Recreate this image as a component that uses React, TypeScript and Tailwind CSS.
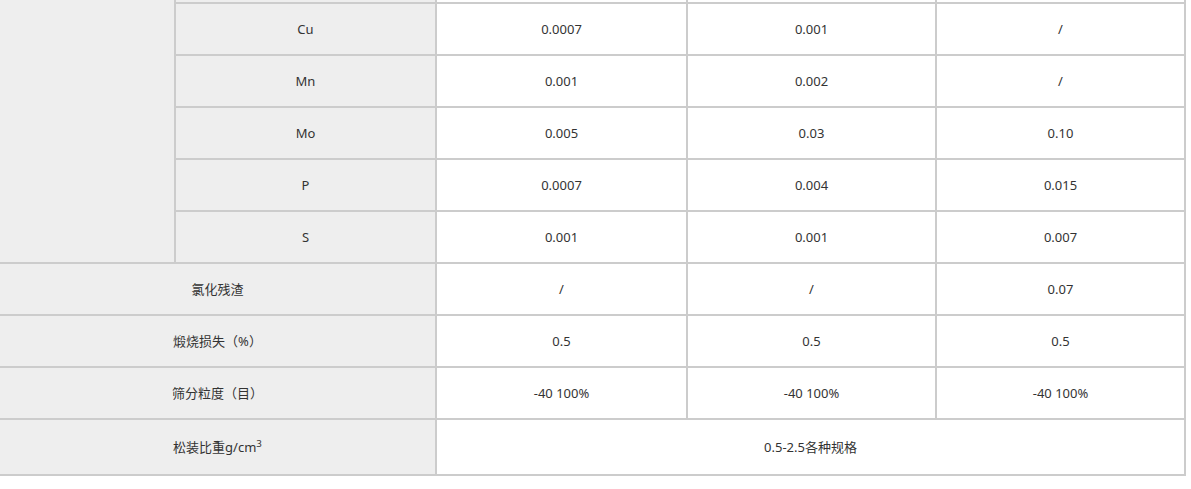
const ROWS: { name: string; values: string[] }[] = [
  { name: 'Cu', values: ['0.0007', '0.001', '/'] },
  { name: 'Mn', values: ['0.001', '0.002', '/'] },
  { name: 'Mo', values: ['0.005', '0.03', '0.10'] },
  { name: 'P', values: ['0.0007', '0.004', '0.015'] },
  { name: 'S', values: ['0.001', '0.001', '0.007'] }
]

const PROPS: { name: string; values: string[] }[] = [
  { name: '氯化残渣', values: ['/', '/', '0.07'] },
  { name: '煅烧损失（%）', values: ['0.5', '0.5', '0.5'] },
  { name: '筛分粒度（目）', values: ['-40 100%', '-40 100%', '-40 100%'] }
]

const cell = 'flex h-[50px] items-center justify-center pt-[2px]'
const head = `${cell} bg-[#eeeeee]`
const body = `${cell} bg-white`

export default function App() {
  return (
    <div
      className="h-[489px] w-[1191px] overflow-hidden bg-white text-[13px] text-[#333333]"
      style={{ fontFamily: '"Noto Sans", "Noto Sans CJK SC", sans-serif' }}
    >
      <div className="-mt-[48px] w-[1186px] bg-[#cccccc] pb-[2px] pr-[2px]">
        <div className="grid grid-cols-[174px_259px_249px_247px_247px] gap-[2px]">
          {/* merged impurity column */}
          <div className="row-span-6 bg-[#eeeeee]" />

          {/* previous row, mostly scrolled out of view */}
          <div className={head} />
          <div className={body} />
          <div className={body} />
          <div className={body} />

          {ROWS.map((r) => (
            <Row key={r.name} name={r.name} values={r.values} />
          ))}

          {PROPS.map((r) => (
            <div key={r.name} className="contents">
              <div className={`col-span-2 ${head}`}>{r.name}</div>
              {r.values.map((v, i) => (
                <div key={i} className={body}>
                  {v}
                </div>
              ))}
            </div>
          ))}

          <div className="col-span-2 flex h-[54px] items-center justify-center bg-[#eeeeee] pt-[2px]">
            <span>
              松装比重g/cm<sup>3</sup>
            </span>
          </div>
          <div className="col-span-3 flex h-[54px] items-center justify-center bg-white pt-[2px]">
            0.5-2.5各种规格
          </div>
        </div>
      </div>
    </div>
  )
}

function Row({ name, values }: { name: string; values: string[] }) {
  return (
    <>
      <div className={head}>{name}</div>
      {values.map((v, i) => (
        <div key={i} className={body}>
          {v}
        </div>
      ))}
    </>
  )
}
